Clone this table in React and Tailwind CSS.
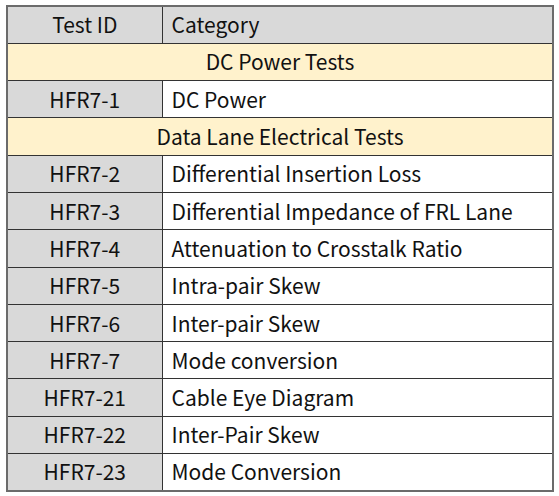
export default function App() {
  const font = { fontFamily: '"Noto Sans CJK SC", "Noto Sans", sans-serif' };
  const rows = [
    { section: "DC Power Tests" },
    { id: "HFR7-1", cat: "DC Power" },
    { section: "Data Lane Electrical Tests" },
    { id: "HFR7-2", cat: "Differential Insertion Loss" },
    { id: "HFR7-3", cat: "Differential Impedance of FRL Lane" },
    { id: "HFR7-4", cat: "Attenuation to Crosstalk Ratio" },
    { id: "HFR7-5", cat: "Intra-pair Skew" },
    { id: "HFR7-6", cat: "Inter-pair Skew" },
    { id: "HFR7-7", cat: "Mode conversion" },
    { id: "HFR7-21", cat: "Cable Eye Diagram" },
    { id: "HFR7-22", cat: "Inter-Pair Skew" },
    { id: "HFR7-23", cat: "Mode Conversion" },
  ];
  return (
    <div className="w-[559px] h-[496px] bg-white pt-[5px] pl-[6px]">
      <table
        className="w-[548px] border-collapse border-2 border-[#6b6b6b] text-[21px] text-[#111] leading-none"
        style={font}
      >
        <tbody>
          <tr className="h-[37.3px] bg-[#d9d9d9]">
            <td className="w-[155px] border border-[#333] text-center">Test ID</td>
            <td className="border border-[#333] pl-[9px] text-left">Category</td>
          </tr>
          {rows.map((r, i) =>
            r.section ? (
              <tr key={i} className="h-[37.3px] bg-[#fff2cc]">
                <td colSpan={2} className="border border-[#333] text-center">
                  {r.section}
                </td>
              </tr>
            ) : (
              <tr key={i} className="h-[37.3px]">
                <td className="border border-[#333] bg-[#d9d9d9] text-center">{r.id}</td>
                <td className="border border-[#333] bg-white pl-[9px] text-left">{r.cat}</td>
              </tr>
            )
          )}
        </tbody>
      </table>
    </div>
  );
}
